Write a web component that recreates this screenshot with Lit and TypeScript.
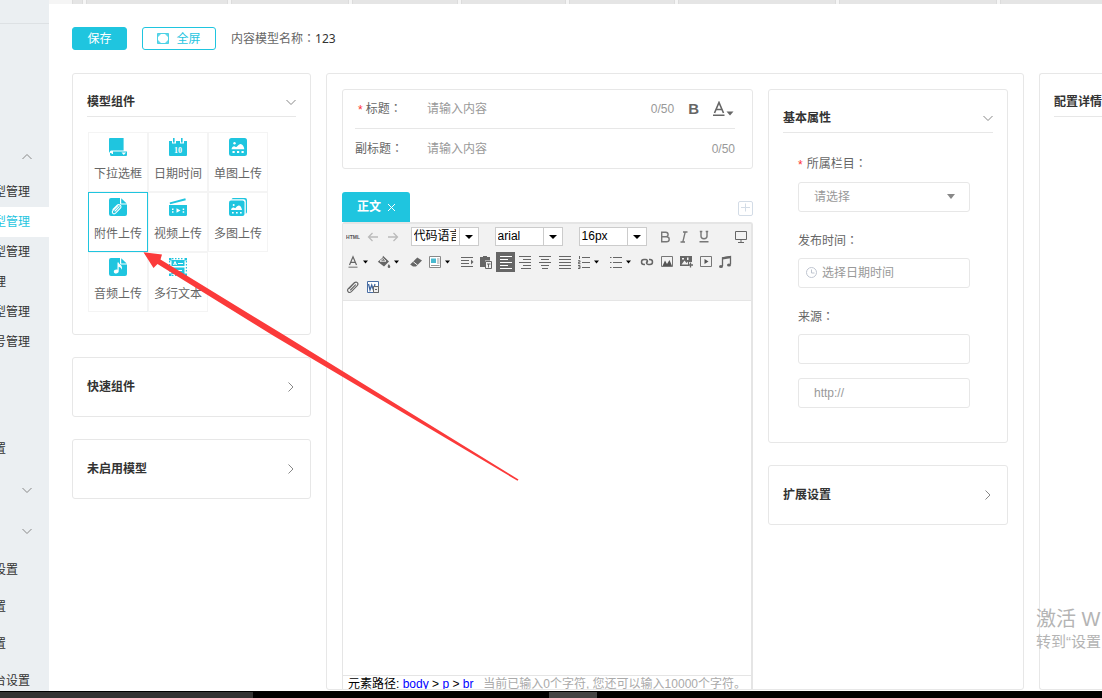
import { LitElement, html, css, svg, nothing } from "lit";
import { customElement } from "lit/decorators.js";
import { classMap } from "lit/directives/class-map.js";

const svgIcon = (size: number, body: unknown, cls = "") =>
  html`<svg class=${cls} width=${size} height=${size} viewBox="0 0 ${size} ${size}" aria-hidden="true">${body}</svg>`;

const C = "#1fc5df";

/* 18px glyphs for the component palette */
const palette: Record<string, unknown> = {
  select: svg`<path fill=${C} d="M0 1a1 1 0 0 1 1-1h13.600v12.500H2.500A2 2 0 0 0 .8 13.700L0 15z"/><path fill=${C} d="M4 13.500h14V17a1 1 0 0 1-1 1H2.500A1.500 1.500 0 0 1 1 16.500V15h1.600v1H4z"/><path fill="#fff" d="M12.500 14.500h4.600l-2.300 2.500z"/>`,
  date: svg`<path fill=${C} d="M0 3h3v2.500h4V3h4v2.500h4V3h3v14a1 1 0 0 1-1 1H1a1 1 0 0 1-1-1z"/><path fill=${C} d="M4 0h1.600v4.500H4zM12 0h1.600v4.500H12z"/><text x="9" y="15" text-anchor="middle" font-size="8" font-weight="700" font-family="Liberation Serif, serif" fill="#fff">10</text>`,
  image: svg`<rect width="18" height="18" rx="2.500" fill=${C}/><path fill="#fff" d="M2.500 11.200c.4-2 1.300-3 2.700-3 1 0 1.300.9 2.100.9S9.600 6 11.500 6c2 0 3.300 2.200 3.800 5.200z"/><circle cx="5.500" cy="5.200" r="1.200" fill="#fff"/><path fill="#fff" d="M3.500 13h2.200v2H3.500zM8 13h2.200v2H8zM12.500 13h2.200v2h-2.200z"/>`,
  attach: svg`<path fill=${C} d="M2 0h9v5.500a1 1 0 0 0 1 1h6V16a2 2 0 0 1-2 2H2a2 2 0 0 1-2-2V2a2 2 0 0 1 2-2z"/><path fill=${C} d="M12.200.3 17.700 5.500h-5.500z"/><g fill="none" stroke="#fff" stroke-width="1.100" stroke-linecap="round"><path d="m4 11.500 4-4c2-2 5.300.3 3.400 2.700l-4.800 5c-2 1.700-4.300-.6-2.800-2.500l4.600-4.500"/><path d="m6 13 4.200-4.300"/></g>`,
  video: svg`<path fill=${C} d="M.6 4.500 16.300.2l.5 2-15.700 4z"/><path fill=${C} d="M0 7h18v9.500a1.500 1.500 0 0 1-1.500 1.500h-15A1.500 1.500 0 0 1 0 16.500z"/><path fill="#fff" d="M7.500 10.200v4.600l4-2.300zM3 10.500h1.500V12H3zM3 13.300h1.500v1.500H3zM13.700 10.500h1.500V12h-1.500zM13.700 13.300h1.500v1.500h-1.500z"/>`,
  images: svg`<path fill=${C} d="M4 0h12a2 2 0 0 1 2 2v12a2 2 0 0 1-1.200 1.800V3.500A2.200 2.200 0 0 0 14.600 1.300H2.500A2 2 0 0 1 4 0z"/><rect y="2.500" width="15.500" height="15.500" rx="2" fill=${C}/><path fill="#fff" d="M2 12c.4-1.700 1.200-2.500 2.300-2.500.9 0 1.100.7 1.800.7S8 7.500 9.700 7.500c1.700 0 2.900 2 3.300 4.500z"/><circle cx="4.700" cy="7" r="1" fill="#fff"/><path fill="#fff" d="M3 14h1.700v1.600H3zM7 14h1.700v1.600H7zM11 14h1.700v1.600H11z"/>`,
  audio: svg`<path fill=${C} d="M2 0h9v5.500a1 1 0 0 0 1 1h6V16a2 2 0 0 1-2 2H2a2 2 0 0 1-2-2V2a2 2 0 0 1 2-2z"/><path fill=${C} d="M12.200.3 17.700 5.500h-5.500z"/><path fill="#fff" d="M8.500 4.500h1.200c.2 1.800 3.300 2.500 3.300 5.200 0 .8-.3 1.500-.7 2 .1-1.700-1-2.600-2.600-3v4.600c0 1.300-1.200 2.200-2.600 2.200s-2.300-.8-2.300-1.800c0-1.200 1.200-2.100 2.600-2.100.4 0 .8.100 1.100.2z"/>`,
  text: svg`<path fill=${C} d="M0 0h2.500v2.500H0zM15.500 0H18v2.500h-2.500zM0 15.500h2.500V18H0zM15.500 15.500H18V18h-2.500zM2.500 2h13v6h-13zM2.500 9.500h13V16h-13z"/><path stroke=${C} stroke-width="1.200" stroke-dasharray="1.500 1.500" d="M3 .6h12M3 17.400h12M.6 3v12M17.400 3v12"/><path fill="none" stroke="#fff" d="M4.500 7 6 3.500 7.500 7M5 6h2M9 5.500h5M5 12.500h8"/>`,
};

/* 14px glyphs for the editor toolbar */
const lines = (d: string) => svg`<path fill="none" stroke="#666" stroke-width="1" d=${d}/>`;
const tools: Record<string, unknown> = {
  html: svg`<text x="7" y="9" text-anchor="middle" font-size="5" font-weight="700" font-family="Liberation Sans, sans-serif" fill="#555">HTML</text>`,
  undo: svg`<path fill="none" stroke="#bbb" stroke-width="1.300" d="M12 7H3M6.500 3 2.500 7l4 4"/>`,
  redo: svg`<path fill="none" stroke="#bbb" stroke-width="1.300" d="M2 7h9M7.500 3l4 4-4 4"/>`,
  bold: svg`<path fill="none" stroke="#777" stroke-width="1.400" d="M3.700 2.200h4c3.200 0 3.200 4.500 0 4.500h-4zM3.700 6.700h4.800c3.600 0 3.600 5.100 0 5.100H3.700z"/>`,
  italic: svg`<path fill="none" stroke="#777" stroke-width="1.300" d="M6 2h4.500M3.500 12H8M8.200 2 5.800 12"/>`,
  underline: svg`<path fill="none" stroke="#777" stroke-width="1.400" d="M4 1.500v4.800c0 3.200 6 3.200 6 0V1.500M2.500 11.800h9M2.800 1.500h2.500M8.700 1.500h2.500"/>`,
  screen: svg`<path fill="none" stroke="#666" d="M1.500 1.500h11v8h-11zM4 12.500h6M7 10v2.500"/>`,
  color: svg`<path fill="none" stroke="#666" stroke-width="1.200" d="M3.500 10 7 1.800 10.500 10M4.800 7.300h4.400"/><path fill="#999" d="M2.500 11.500h9V13h-9z"/>`,
  bucket: svg`<path fill="#666" d="M6 .8 12 6.500 7 11.500.8 6.700 5.500 2.800zM11.800 9c.8 1 1.500 2 1.500 2.700a1.300 1.300 0 0 1-2.600 0c0-.7.500-1.700 1.100-2.700z"/><path stroke="#fff" stroke-width=".9" fill="none" d="M3 6.200 6.300 3.500 9 6.200z"/>`,
  eraser: svg`<path fill="#666" d="M8.300 2.500 13 5.500 7 11.500H4L1.200 9.500z"/><path stroke="#f2f2f2" stroke-width="1" fill="none" d="m4.300 6.800 4.200 3.300"/>`,
  template: svg`<path fill="#fff" stroke="#888" d="M1.500 1.500h11v11h-11z"/><path fill="#49b9cf" d="M3 3.500h5v4.500H3z"/><path stroke="#999" d="M9 4h2.500M9 6h2.500M9 8h2.500M3 10.500h8.500"/>`,
  indent: svg`<path fill="none" stroke="#666" d="M1 2.500h12M1 5.500h8M1 8.500h8M1 11.500h12"/><path fill="#666" d="M11 4.500 13.500 7 11 9.500z"/>`,
  paste: svg`<path fill="#666" d="M1 2h3V1h4v1h3v3.500H6V12H1z"/><path fill="#f2f2f2" stroke="#666" d="M6.500 6.500h6v7h-6z"/><path stroke="#666" d="M8 9h3.500M9.500 9v3.500M3 3.500h5"/>`,
  left: svg`<path stroke="#fff" d="M1 1.500h12M1 4.500h8M1 7.500h12M1 10.500h8M1 13.500h12"/>`,
  right: lines("M1 1.500h12M5 4.500h8M1 7.500h12M5 10.500h8M3 13.500h10"),
  center: lines("M1 1.500h12M3 4.500h8M1 7.500h12M3 10.500h8M4 13.500h6"),
  justify: lines("M1 1.500h12M1 4.500h12M1 7.500h12M1 10.500h12M1 13.500h12"),
  ol: svg`<path fill="none" stroke="#666" d="M5 2.500h8M5 7.500h8M5 12.500h8M2.500 1v3M1 5.700h2v1.500H1.500v1.500h2M1 10.500h2v3H1M1.500 12h1.500"/>`,
  ul: svg`<path stroke="#666" d="M4 2.500h9M4 7.500h9M4 12.500h9M1 2.500h1.500M1 7.500h1.500M1 12.500h1.500"/>`,
  link: svg`<path fill="none" stroke="#666" stroke-width="1.500" d="M5 9.500H4a2.500 2.500 0 0 1 0-5h1.500C7.500 4.500 8 6 7 7.500M9 4.500h1a2.500 2.500 0 0 1 0 5H8.500C6.500 9.500 6 8 7 6.500"/>`,
  pic: svg`<path fill="none" stroke="#777" d="M1.500 1.500h11v10h-11z"/><path fill="#555" d="M2.500 11 5 5.500 7 9l2.500-4L12 11z"/>`,
  picadd: svg`<path fill="#666" d="M1 1h12v6h-3v4H1z"/><path fill="#f2f2f2" d="m2.500 9.500 3-4 2 2.500 1.500-1.500v3zM3 3h2v1.500H3zM8 2.500h1.500V5H8z"/><path stroke="#666" stroke-width="1.300" d="M11.500 7.500v5M9 10h5"/>`,
  movie: svg`<path fill="none" stroke="#777" d="M1.500 1.500h11v10h-11z"/><path fill="#555" d="M5.500 4v5L9.500 6.500z"/>`,
  music: svg`<path fill="none" stroke="#666" stroke-width="1.300" d="M4.500 11V2.800L12.500 1.500v8"/><path fill="#666" d="m4.500 2.300 8-1.300v2.200l-8 1.300z"/><ellipse cx="3" cy="11.500" rx="2" ry="1.500" fill="#666"/><ellipse cx="11" cy="10" rx="2" ry="1.500" fill="#666"/>`,
  clip: svg`<path fill="none" stroke="#666" stroke-width="1.100" stroke-linecap="round" d="M3 8.500 8.200 3c2.300-2.200 5 .4 3 2.700l-5.800 6C3 13.700.3 11 2.300 8.700l6-6M4.500 10 9.500 4.800"/>`,
  word: svg`<path fill="#fff" stroke="#4a6fa5" d="M1.500 1.500h11v11h-11z"/><path fill="none" stroke="#3f66a0" stroke-width="1.300" d="m2.500 4 1.500 6 1.700-5 1.700 5L9 4"/><path fill="#eee" stroke="#666" d="M7.500 6.500h5v6h-5zM9 9.500h2"/>`,
};

const chevron = (dir: "down" | "up" | "right") => {
  const d = { down: "M2.500 4 7 8.500 11.500 4", up: "M2.500 8 7 3.500 11.500 8", right: "M4.500 1.500 9 6l-4.500 4.500" }[dir];
  return html`<svg width="12" height="12" viewBox="0 0 12 12" aria-hidden="true"><path fill="none" stroke="#888" d=${d} /></svg>`;
};

const colon = html`<span class="colon">：</span>`;

const base = css`
  * { box-sizing: border-box; }
  button, input, select, textarea { font: inherit; color: inherit; margin: 0; padding: 0; border: 0; border-radius: 0; background: none; outline: none; }
  button { cursor: pointer; }
  a { text-decoration: none; color: inherit; }
  svg { display: block; flex: none; }
  .colon { font-family: "Noto Sans CJK TC", sans-serif; }
  .required { color: #f33; font-family: "Liberation Sans", sans-serif; vertical-align: middle; }
`;

@customElement("side-nav")
class SideNav extends LitElement {
  static styles = [base, css`
    :host { flex: none; width: 49px; background: #ebeff2; overflow: hidden; color: #333; }
    .brand { height: 24px; border-bottom: 1px solid #dde1e4; }
    .toggle { display: flex; align-items: center; justify-content: flex-end; width: 100%; height: 41px; padding-right: 17px; }
    .first { margin-top: 112px; }
    .item { display: flex; align-items: center; justify-content: flex-end; height: 30px; padding-right: 19px; white-space: nowrap; }
    .tall { height: 37px; }
    .mid { padding-right: 31px; }
    .short { padding-right: 43px; }
    .active { background: #fff; color: #1fc5df; }
    .system { margin: 73px 0 2px; }
  `];
  private item(text: string, cls: Record<string, boolean> = {}) {
    return html`<a href="#" class=${classMap({ item: true, ...cls })}>${text}</a>`;
  }
  render() {
    return html`
      <div class="brand"></div>
      <nav>
        <button class="toggle first" aria-label="收起">${chevron("up")}</button>
        ${this.item("型管理")} ${this.item("型管理", { active: true })} ${this.item("型管理")}
        ${this.item("理", { short: true })} ${this.item("型管理")} ${this.item("号管理")}
        <div class="system">${this.item("置", { tall: true, short: true })}</div>
        <button class="toggle" aria-label="展开">${chevron("down")}</button>
        <button class="toggle" aria-label="展开">${chevron("down")}</button>
        ${this.item("设置", { tall: true, mid: true })} ${this.item("置", { tall: true, short: true })}
        ${this.item("置", { tall: true, short: true })} ${this.item("台设置", { tall: true })}
      </nav>`;
  }
}

@customElement("fold-card")
class FoldCard extends LitElement {
  static properties = { heading: {}, open: { type: Boolean } };
  declare heading: string;
  declare open: boolean;
  static styles = [base, css`
    :host { display: block; flex: none; background: #fff; border: 1px solid #e7e7e7; border-radius: 3px; padding: 0 14px; }
    .head { display: flex; align-items: center; justify-content: space-between; width: 100%; height: 58px; font-weight: 700; color: #333; }
    .open { height: 43px; padding-top: 14px; border-bottom: 1px solid #e7e7e7; }
  `];
  render() {
    return html`
      <button class=${classMap({ head: true, open: this.open })} aria-expanded=${this.open ? "true" : "false"}>
        <span>${this.heading}</span>${chevron(this.open ? "down" : "right")}
      </button>
      ${this.open ? html`<slot></slot>` : nothing}`;
  }
}

@customElement("component-palette")
class ComponentPalette extends LitElement {
  static styles = [base, css`
    :host { display: grid; grid-template-columns: repeat(auto-fill, 60px); padding: 15px 1px 22px; }
    .cell { display: flex; flex-direction: column; align-items: center; gap: 8px; height: 60px; padding-top: 5px; border: 1px solid #f4f4f4; color: #666; line-height: 20px; white-space: nowrap; }
    .picked { border-color: #1fc5df; }
  `];
  render() {
    const items = [
      ["select", "下拉选框"], ["date", "日期时间"], ["image", "单图上传"],
      ["attach", "附件上传"], ["video", "视频上传"], ["images", "多图上传"],
      ["audio", "音频上传"], ["text", "多行文本"],
    ];
    return items.map(([icon, label]) => html`
      <button class=${classMap({ cell: true, picked: icon === "attach" })}>${svgIcon(18, palette[icon])}<span>${label}</span></button>`);
  }
}

@customElement("title-form")
class TitleForm extends LitElement {
  static styles = [base, css`
    :host { display: block; flex: none; border: 1px solid #e7e7e7; border-radius: 3px; padding: 0 17px 0 12px; color: #666; }
    .row { display: flex; align-items: center; height: 38px; }
    .row + .row { height: 40px; border-top: 1px solid #e7e7e7; }
    .label { flex: none; width: 72px; white-space: nowrap; }
    .must { padding-left: 3px; }
    .must .required { margin-right: 3px; }
    .input { flex: 1; min-width: 0; height: 30px; }
    .input::placeholder { color: #999; opacity: 1; }
    .count { color: #999; font-size: 12px; }
    .bold { margin-left: 14px; font-size: 15px; font-weight: 700; }
    .color { margin-left: 14px; }
  `];
  render() {
    return html`
      <div class="row">
        <label class="label must" for="title"><span class="required">*</span>标题${colon}</label>
        <input id="title" class="input" placeholder="请输入内容" />
        <span class="count">0/50</span>
        <button class="bold" aria-label="加粗">B</button>
        <button class="color" aria-label="颜色">
          <svg width="22" height="16" viewBox="0 0 22 16"><path fill="none" stroke="#666" stroke-width="1.600" d="M1.500 12 6 1.500 10.500 12M3 8.500h6" /><path fill="#666" d="M0 13.500h11.500V15H0zM13.500 10.500h7l-3.500 4z" /></svg>
        </button>
      </div>
      <div class="row">
        <label class="label" for="sub">副标题${colon}</label>
        <input id="sub" class="input" placeholder="请输入内容" />
        <span class="count">0/50</span>
      </div>`;
  }
}

@customElement("rich-editor")
class RichEditor extends LitElement {
  static styles = [base, css`
    :host { display: flex; flex-direction: column; flex: 1; min-height: 0; }
    .tabs { display: flex; align-items: flex-end; justify-content: space-between; }
    .tab { display: flex; align-items: center; gap: 6px; height: 30px; padding: 0 14px 0 15px; border-radius: 3px 3px 0 0; background: #1fc5df; color: #fff; font-weight: 700; }
    .add { margin-bottom: 6px; }
    .frame { display: flex; flex-direction: column; flex: 1; min-height: 0; border: solid #e5e5e5; border-width: 2px 2px 0 1px; border-radius: 3px 3px 0 0; }
    .bar { background: #f2f2f2; border-bottom: 1px solid #e5e5e5; padding-bottom: 1px; }
    .row { display: flex; align-items: center; height: 25px; max-width: 392px; }
    .wide { max-width: none; }
    .btn { display: flex; align-items: center; flex: 0 1 20px; min-width: 0; height: 20px; padding-left: 3px; }
    .split { flex-basis: 32px; gap: 3px; }
    .on { background: #666; }
    .pick { display: block; position: relative; flex: none; width: 68px; margin: 0 8px; }
    .pick select { display: block; appearance: none; width: 100%; height: 19px; padding: 0 22px 0 2px; border: 1px solid #ccc; background: #fff; color: #000; line-height: 17px; text-overflow: clip; }
    .drop { position: absolute; top: 1px; right: 1px; width: 19px; height: 17px; border-left: 1px solid #ccc; background: #fff; pointer-events: none; display: grid; place-items: center; }
    .screen { margin-left: 17px; }
    .text { display: block; flex: 1; min-height: 0; width: 100%; resize: none; background: #fff; }
    .status { display: flex; flex: none; justify-content: space-between; height: 14px; padding: 0 5px; border-top: 1px solid #e5e5e5; color: #000; line-height: 16px; white-space: nowrap; overflow: hidden; }
    .status a { color: #00f; }
    .hint { color: #aaa; }
  `];
  private caret = html`<svg width="5" height="4" viewBox="0 0 5 4" aria-hidden="true"><path d="M0 .5h5L2.500 3.500z" /></svg>`;
  private tool(name: string, label: string, opts: { split?: boolean; on?: boolean; screen?: boolean } = {}) {
    return html`<button class=${classMap({ btn: true, split: !!opts.split, on: !!opts.on, screen: !!opts.screen })} aria-label=${label}>
      ${svgIcon(14, tools[name])}${opts.split ? this.caret : nothing}</button>`;
  }
  private pick(label: string, value: string) {
    return html`<span class="pick"><select aria-label=${label}><option>${value}</option></select>
      <span class="drop"><svg width="8" height="4" viewBox="0 0 8 4"><path d="M0 0h8L4 4z" /></svg></span></span>`;
  }
  render() {
    return html`
      <div class="tabs">
        <button class="tab">正文
          <svg width="9" height="9" viewBox="0 0 9 9"><path stroke="#fff" d="m1 1 7 7M8 1 1 8" /></svg>
        </button>
        <button class="add" aria-label="添加">
          <svg width="15" height="15" viewBox="0 0 15 15"><rect x=".5" y=".5" width="14" height="14" rx="1.500" fill="#fff" stroke="#d3dce6" /><path stroke="#d3dce6" d="M3 6.500h9M7.500 2.500v8" /></svg>
        </button>
      </div>
      <div class="frame">
        <div class="bar">
          <div class="row wide">
            ${this.tool("html", "源代码")}${this.tool("undo", "撤销")}${this.tool("redo", "重做")}
            ${this.pick("代码语言", "代码语言")}${this.pick("字体", "arial")}${this.pick("字号", "16px")}
            ${this.tool("bold", "加粗")}${this.tool("italic", "斜体")}${this.tool("underline", "下划线")}
            ${this.tool("screen", "全屏", { screen: true })}
          </div>
          <div class="row">
            ${this.tool("color", "字体颜色", { split: true })}${this.tool("bucket", "背景色", { split: true })}
            ${this.tool("eraser", "清除格式")}${this.tool("template", "模板", { split: true })}
            ${this.tool("indent", "首行缩进")}${this.tool("paste", "粘贴")}
            ${this.tool("left", "居左对齐", { on: true })}${this.tool("right", "居右对齐")}
            ${this.tool("center", "居中对齐")}${this.tool("justify", "两端对齐")}
            ${this.tool("ol", "有序列表", { split: true })}${this.tool("ul", "无序列表", { split: true })}
            ${this.tool("link", "超链接")}${this.tool("pic", "图片")}${this.tool("picadd", "多图")}
            ${this.tool("movie", "视频")}${this.tool("music", "音乐")}
          </div>
          <div class="row">${this.tool("clip", "附件")}${this.tool("word", "Word")}</div>
        </div>
        <textarea class="text" aria-label="正文"></textarea>
        <div class="status">
          <span>元素路径: <a href="#">body</a> &gt; <a href="#">p</a> &gt; <a href="#">br</a></span>
          <span class="hint">当前已输入0个字符, 您还可以输入10000个字符。</span>
        </div>
      </div>`;
  }
}

@customElement("property-form")
class PropertyForm extends LitElement {
  static styles = [base, css`
    :host { display: flex; flex-direction: column; padding: 20px 23px 34px 15px; color: #666; }
    .label { line-height: 20px; margin-bottom: 7px; white-space: nowrap; }
    .label .required { margin-right: 4px; }
    .box { display: flex; align-items: center; position: relative; height: 30px; border: 1px solid #e7e7e7; border-radius: 3px; margin-bottom: 18px; }
    .tight { margin-bottom: 14px; }
    .last { margin-bottom: 0; }
    .field { appearance: none; width: 100%; height: 28px; padding: 0 15px; color: #999; }
    .field::placeholder { color: #999; opacity: 1; }
    .date { padding-left: 5px; }
    .arrow { position: absolute; right: 14px; pointer-events: none; }
    .clock { margin-left: 7px; }
  `];
  render() {
    return html`
      <label class="label" for="column"><span class="required">*</span>所属栏目${colon}</label>
      <div class="box">
        <select id="column" class="field"><option>请选择</option></select>
        <svg class="arrow" width="8" height="5" viewBox="0 0 8 5"><path fill="#888" d="M0 0h8L4 5z" /></svg>
      </div>
      <label class="label" for="time">发布时间${colon}</label>
      <div class="box">
        <svg class="clock" width="11" height="11" viewBox="0 0 11 11"><circle cx="5.500" cy="5.500" r="5" fill="none" stroke="#bfc5d0" /><path fill="none" stroke="#bfc5d0" d="M5.500 2.500v3.500H8.500" /></svg>
        <input id="time" class="field date" placeholder="选择日期时间" />
      </div>
      <label class="label" for="source">来源${colon}</label>
      <div class="box tight"><input id="source" class="field" /></div>
      <div class="box last"><input class="field" aria-label="来源链接" placeholder="http://" /></div>`;
  }
}

@customElement("app-root")
class AppRoot extends LitElement {
  static styles = [base, css`
    :host { display: flex; flex-direction: column; position: relative; height: 100vh; overflow: hidden; background: #fff; color: #666; font: 12px/18px "Liberation Sans", "Noto Sans CJK SC", sans-serif; }
    .shell { display: flex; flex: 1; min-height: 0; }
    .main { display: flex; flex-direction: column; flex: 1; min-width: 0; }
    .strip { display: flex; flex: none; gap: 3px; height: 4px; padding-left: 23px; background: #f5f5f5; overflow: hidden; }
    .page { flex: none; background: #e5e5e5; border: solid #dcdcdc; border-width: 0 1px; }
    .actions { display: flex; flex: none; align-items: center; gap: 15px; padding: 23px; white-space: nowrap; }
    .save, .full { display: flex; align-items: center; justify-content: center; height: 23px; border: 1px solid #1fc5df; border-radius: 3px; }
    .save { min-width: 55px; background: #1fc5df; color: #fff; }
    .full { min-width: 74px; gap: 7px; color: #1fc5df; }
    .name b { font-weight: 400; color: #333; font-family: "Noto Sans", sans-serif; }
    .columns { display: flex; flex: 1; gap: 15px; min-height: 0; padding-left: 23px; }
    .left { display: flex; flex-direction: column; flex: 0 0 239px; gap: 22px; }
    .middle { display: flex; flex: 1; min-width: 0; gap: 15px; padding: 15px 15px 0; border: 1px solid #e7e7e7; border-radius: 3px; margin-bottom: 1px; }
    .write { display: flex; flex-direction: column; flex: 1; min-width: 0; gap: 23px; }
    .props { display: flex; flex-direction: column; flex: 0 0 240px; gap: 22px; }
    .detail { flex: 0 0 63px; min-width: 0; border: solid #e7e7e7; border-width: 1px 0 1px 1px; border-radius: 3px 0 0 3px; padding-left: 14px; margin-bottom: 1px; white-space: nowrap; }
    .detail h2 { display: flex; align-items: center; height: 43px; padding-top: 14px; margin: 0; border-bottom: 1px solid #e7e7e7; font-size: 12px; color: #333; }
    .taskbar { display: flex; flex: none; height: 7px; padding-top: 1px; background: #000; }
    .search { width: 253px; background: #333; }
    .window { width: 48px; margin-left: 296px; background: #444; }
    .arrow { position: absolute; left: 143px; top: 252px; pointer-events: none; }
    .notice { position: absolute; right: 0; bottom: 46px; width: 66px; overflow: hidden; color: #b4b4b4; white-space: nowrap; pointer-events: none; font-size: 15px; line-height: 20px; }
    .big { font-size: 20px; line-height: 26px; }
  `];
  render() {
    const pages = [11, 142, 118, 106, 105, 106, 158, 158, 158];
    return html`
      <div class="shell">
        <side-nav></side-nav>
        <div class="main">
          <div class="strip">${pages.map((w) => html`<span class="page" style="width:${w}px"></span>`)}</div>
          <div class="actions">
            <button class="save">保存</button>
            <button class="full">
              <svg width="12" height="11" viewBox="0 0 12 11"><path fill="none" stroke="#1fc5df" d="M.5.5h11v10H.5z" opacity=".8" /><path fill="#1fc5df" d="M1 1h3L1 4zM11 1v3L8 1zM1 10V7l3 3zM11 10H8l3-3z" opacity=".7" /></svg>全屏
            </button>
            <span class="name">内容模型名称${colon}<b>123</b></span>
          </div>
          <div class="columns">
            <div class="left">
              <fold-card heading="模型组件" open><component-palette></component-palette></fold-card>
              <fold-card heading="快速组件"></fold-card>
              <fold-card heading="未启用模型"></fold-card>
            </div>
            <div class="middle">
              <div class="write"><title-form></title-form><rich-editor></rich-editor></div>
              <div class="props">
                <fold-card heading="基本属性" open><property-form></property-form></fold-card>
                <fold-card heading="扩展设置"></fold-card>
              </div>
            </div>
            <div class="detail"><h2>配置详情</h2></div>
          </div>
        </div>
      </div>
      <div class="taskbar"><span class="search"></span><span class="window"></span></div>
      <svg class="arrow" width="376" height="229" viewBox="0 0 376 229" aria-hidden="true"><path fill="#fb3a3a" d="M.5.300 19 2.500 17.500 7.500 141 83 375.500 227.500 374.500 228.800 130 83.500 14.500 12 10.500 16z" /></svg>
      <div class="notice"><div class="big">激活 W</div><div>转到“设置</div></div>`;
  }
}
